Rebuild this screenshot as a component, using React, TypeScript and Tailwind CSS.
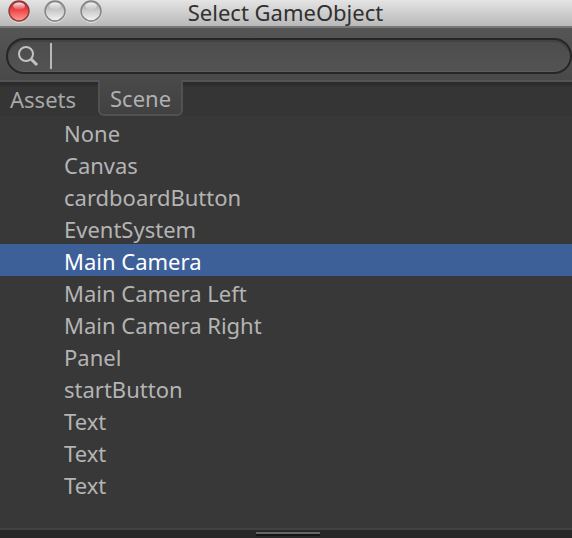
import { useState } from "react";

const objects = [
  "None",
  "Canvas",
  "cardboardButton",
  "EventSystem",
  "Main Camera",
  "Main Camera Left",
  "Main Camera Right",
  "Panel",
  "startButton",
  "Text",
  "Text",
  "Text",
];

function WindowButton({ label, red = false }: { label: string; red?: boolean }) {
  const id = red ? "lightRed" : "lightGray" + label;
  return (
    <button type="button" aria-label={label} className="size-6 shrink-0">
      <svg viewBox="0 0 24 24" className="size-6">
        <defs>
          <linearGradient id={id} x1="0" y1="0" x2="0" y2="1">
            <stop offset="0" stopColor={red ? "#b8272b" : "#9a9a9a"} />
            <stop offset="0.45" stopColor={red ? "#ee4545" : "#c8c8c8"} />
            <stop offset="1" stopColor={red ? "#ff9c98" : "#f4f4f4"} />
          </linearGradient>
          <linearGradient id={id + "Shine"} x1="0" y1="0" x2="0" y2="1">
            <stop offset="0" stopColor="#fff" stopOpacity="0.9" />
            <stop offset="1" stopColor="#fff" stopOpacity="0.1" />
          </linearGradient>
        </defs>
        <circle cx="12" cy="12" r="10.5" fill="none" stroke="#fff" strokeOpacity="0.5" />
        <circle cx="12" cy="11" r="10" fill={`url(#${id})`} stroke={red ? "#8e3a3a" : "#838383"} strokeWidth="1.5" />
        <ellipse cx="12" cy="6" rx="6" ry="3.5" fill={`url(#${id}Shine)`} />
      </svg>
    </button>
  );
}

function TitleBar() {
  return (
    <header className="grid h-7 shrink-0 grid-cols-[1fr_auto_1fr] border-b-2 border-[#777777] bg-linear-to-b from-[#e4e4e4] to-[#b9b9b9] pr-2 pl-[7px]">
      <div className="flex gap-3">
        <WindowButton label="Close" red />
        <WindowButton label="Minimize" />
        <WindowButton label="Zoom" />
      </div>
      <h1 className="text-[22px] leading-6 text-[#303030]">Select GameObject</h1>
    </header>
  );
}

function SearchField() {
  return (
    <div className="h-[52px] shrink-0 bg-linear-to-b from-[#555555] to-[#494949] pt-[10px] pl-[6px]">
      <label className="flex h-9 items-center rounded-full border-2 border-[#262626] bg-linear-to-b from-[#4c4c4c] to-[#535353] pr-4 pl-[9px] shadow-[inset_0_2px_0_#424242,inset_0_-1px_0_#5b5b5b]">
        <svg viewBox="0 0 22 22" className="size-[22px] shrink-0" fill="none" stroke="#c2c2c2">
          <circle cx="9" cy="9" r="7" strokeWidth="2" />
          <path d="M14 14l6 6" strokeWidth="3" />
        </svg>
        <span className="ml-[11px] h-[26px] w-[2px] shrink-0 bg-[#b8b8b8]" />
        <input
          type="text"
          autoFocus
          aria-label="Search"
          className="w-full min-w-0 bg-transparent text-[22px] text-[#b4b4b4] caret-transparent outline-none"
        />
      </label>
    </div>
  );
}

function Tabs() {
  const [tab, setTab] = useState("Scene");
  return (
    <div role="tablist" className="flex h-9 shrink-0 bg-linear-to-b from-[#2a2a2a] from-10% to-[#353535] to-20%">
      {["Assets", "Scene"].map((name) => (
        <button
          key={name}
          type="button"
          role="tab"
          aria-selected={tab === name}
          onClick={() => setTab(name)}
          className={
            tab === name
              ? "rounded-b-md border-x-2 border-b-2 border-[#515151] bg-linear-to-b from-[#494949] to-[#414141] px-[10px] pt-[2px] text-[22px] leading-8 text-[#b0b0b0]"
              : "min-w-[98px] border-t-2 border-[#555555] px-[10px] text-left text-[22px] leading-8 text-[#a8a8a8]"
          }
        >
          {name}
        </button>
      ))}
      <div className="flex-1 border-t-2 border-[#555555]" />
    </div>
  );
}

export default function App() {
  const [selected, setSelected] = useState(4);
  return (
    <div className="flex min-h-screen flex-col bg-[#383838] font-['Noto_Sans',sans-serif]">
      <TitleBar />
      <SearchField />
      <Tabs />
      <ul className="flex-1">
        {objects.map((name, i) => (
          <li key={i}>
            <button
              type="button"
              onClick={() => setSelected(i)}
              className={
                i === selected
                  ? "block h-8 w-full bg-[#3d6099] pl-16 text-left text-[22px] leading-[34px] text-white"
                  : "block h-8 w-full pl-16 text-left text-[22px] leading-[34px] text-[#b4b4b4]"
              }
            >
              {name}
            </button>
          </li>
        ))}
      </ul>
      <footer className="flex h-[10px] shrink-0 justify-center border-t-2 border-[#424242] bg-[#282828] pt-[2px] pl-1">
        <div className="h-1 w-16 border-t-2 border-b-2 border-t-[#666666] border-b-[#141414]" />
      </footer>
    </div>
  );
}
